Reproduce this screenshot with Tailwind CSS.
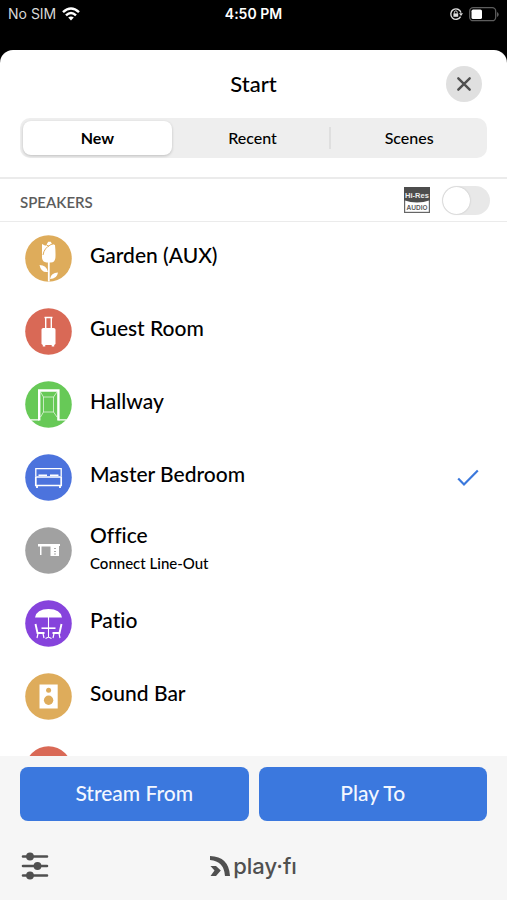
<!DOCTYPE html>
<html lang="en">
<head>
<meta charset="utf-8">
<meta name="viewport" content="width=device-width, initial-scale=1">
<title>Start</title>
<script src="https://cdn.jsdelivr.net/npm/@tailwindcss/browser@4"></script>
</head>
<body class="flex h-dvh flex-col overflow-hidden bg-black font-['Lato','Liberation_Sans',sans-serif] text-black [font-variant-ligatures:none]">

<div class="grid h-[50px] shrink-0 grid-cols-3 items-start px-2 pt-1 font-['Inter','Liberation_Sans',sans-serif] text-sm leading-5 text-white">
  <div class="flex items-center gap-1.5">
    <span class="text-[#d8d8d8]">No SIM</span>
    <svg class="h-[14px] w-[18px]" viewBox="0 0 18 14" fill="none" stroke="#fff" stroke-width="2.5" aria-hidden="true">
      <path d="M1 5.2Q9-2.2 17 5.2"/><path d="M4 8.3Q9 3.6 14 8.3"/><path d="M9 13.5L6.2 10.6Q9 8.4 11.8 10.6Z" fill="#fff" stroke="none"/>
    </svg>
  </div>
  <span class="text-center font-semibold">4:50 PM</span>
  <div class="flex h-5 items-center justify-end gap-1.5">
    <svg class="size-[14px]" viewBox="0 0 14 14" fill="none" stroke="#ddd" stroke-width="1.4" aria-hidden="true">
      <path d="M11.6 9.6A5.2 5.2 0 1 1 12 5.6"/><path d="M10 6.2h4L12 9z" fill="#ddd" stroke="none"/><path d="M4.4 6.4h4.8v3.4H4.4z" fill="#ddd" stroke="none"/><path d="M5.4 6.6V5.3a1.4 1.4 0 0 1 2.8 0v1.3" stroke-width="1"/>
    </svg>
    <svg class="h-[15px] w-[30px]" viewBox="0 0 30 15" aria-hidden="true">
      <rect x=".7" y=".7" width="26" height="13" rx="3.5" fill="none" stroke="#5d5d5d" stroke-width="1.3"/>
      <rect x="2.5" y="2.6" width="10.5" height="9.4" rx="1.6" fill="#fff"/><path d="M28 5v5q1.7-.8 1.7-2.500T28 5z" fill="#5d5d5d"/>
    </svg>
  </div>
</div>

<main class="flex min-h-0 flex-1 flex-col overflow-hidden rounded-t-[13px] bg-white">
  <header class="grid h-[68px] shrink-0 grid-cols-[36px_1fr_36px] items-center px-[25px]">
    <h1 class="col-start-2 text-center text-[22px] leading-7 font-medium">Start</h1>
    <button type="button" aria-label="Close" class="grid size-9 place-items-center rounded-full bg-[#e0e0e0]">
      <svg class="size-4" viewBox="0 0 16 16" fill="none" stroke="#505050" stroke-width="2.400" stroke-linecap="round" aria-hidden="true"><path d="M2.300 2.300l11.400 11.400M13.700 2.300L2.300 13.700"/></svg>
    </button>
  </header>

  <div role="tablist" class="mx-5 grid h-10 shrink-0 grid-cols-3 items-center rounded-[10px] bg-[#eee] text-base">
    <button type="button" role="tab" aria-selected="true" class="mr-1 ml-[3px] h-[34px] rounded-lg bg-white font-bold shadow-[0_1px_3px_rgba(0,0,0,0.2)]">New</button>
    <button type="button" role="tab" aria-selected="false" class="h-[22px] border-r-2 border-[#dfdfdf] leading-5 font-medium">Recent</button>
    <button type="button" role="tab" aria-selected="false" class="h-[22px] leading-5 font-medium">Scenes</button>
  </div>

  <div class="mt-[19px] flex h-[45px] shrink-0 items-center border-t-2 border-b border-[#ebebeb] pr-[17px] pl-5">
    <h2 class="flex-1 pt-1 text-[15px] leading-5 font-semibold text-[#5c5c5c]">SPEAKERS</h2>
    <svg class="mr-3 size-[26px]" viewBox="0 0 26 26" role="img" aria-label="Hi-Res Audio">
      <rect x=".6" y=".6" width="24.800" height="24.800" fill="#fff" stroke="#666" stroke-width="1.2"/>
      <path d="M0 0h26v13.200Q13 18 0 13.200z" fill="#4d4d4d"/>
      <text x="13" y="11" text-anchor="middle" font-family="Liberation Sans, sans-serif" font-size="7.500" font-weight="700" fill="#eee">Hi-Res</text>
      <text x="13" y="23" text-anchor="middle" font-family="Inter, sans-serif" font-size="6.500" font-weight="600" fill="#555">AUDIO</text>
    </svg>
    <input type="checkbox" role="switch" aria-label="Hi-Res Audio" class="h-[29px] w-12 appearance-none rounded-full bg-[#e8e8e8] p-px before:block before:size-[27px] before:rounded-full before:bg-white before:shadow-[0_0_2px_rgba(0,0,0,0.2)]">
  </div>

  <ul class="min-h-0 flex-1 overflow-hidden text-[21px] leading-7 font-medium">
    <li><button type="button" class="flex h-[73px] w-full items-center gap-[18px] pr-7 pl-[25px] text-left">
      <svg class="size-[47px] shrink-0" viewBox="0 0 47 47" aria-hidden="true">
        <circle cx="23.500" cy="23.500" r="23.300" fill="#deac5b"/>
        <path d="M17 9l3.500 1.800 1.500-2 1.200-2h2.600l1 2L30 10q.8 8 .4 13-.8 4.500-4.400 4.500h-4.500q-4-.5-4.500-4.500z" fill="#fff"/>
        <path d="M18 20q1-7 8-10.500l2-.5M21 9.500l3 2" fill="none" stroke="#deac5b" stroke-width="1"/>
        <path d="M23.800 27v19.500" stroke="#fff" stroke-width="1.800"/>
        <path d="M14.500 30q7 0 8.500 7-7 1-8.500-7zM33 37.500q-7 0-8 6.500 7 0 8-6.500z" fill="#fff"/>
      </svg><span class="pb-2">Garden (AUX)</span></button></li>
    <li><button type="button" class="flex h-[73px] w-full items-center gap-[18px] pr-7 pl-[25px] text-left">
      <svg class="size-[47px] shrink-0" viewBox="0 0 47 47" aria-hidden="true">
        <circle cx="23.500" cy="23.500" r="23.300" fill="#d96956"/>
        <path d="M19.500 9.500h8M20.700 10v11M26.300 10v11" stroke="#fff" stroke-width="1.400" fill="none"/>
        <rect x="16.500" y="20" width="14" height="17" rx="1.800" fill="#fff"/><path d="M17.800 36h2.500v2.500h-2.500zM26.700 36h2.500v2.500h-2.500z" fill="#fff"/>
      </svg><span class="pb-2">Guest Room</span></button></li>
    <li><button type="button" class="flex h-[73px] w-full items-center gap-[18px] pr-7 pl-[25px] text-left">
      <svg class="size-[47px] shrink-0" viewBox="0 0 47 47" fill="none" stroke="#fff" aria-hidden="true">
        <circle cx="23.500" cy="23.500" r="23.300" fill="#67c957" stroke="none"/>
        <path d="M5.500 38.800h8.500M33.500 38.800h8" stroke-width="1.300"/><path d="M14.200 39.400V9.500h19.200v29.900" stroke-width="2.400"/>
        <path d="M18.500 16h10v15h-10zM15.500 11l3 5M32 11l-3.500 5M18.500 31l-3 5M28.500 31l3.500 5" stroke-width=".8" stroke-opacity=".8"/>
      </svg><span class="pb-2">Hallway</span></button></li>
    <li><button type="button" aria-pressed="true" class="flex h-[73px] w-full items-center gap-[18px] pr-7 pl-[25px] text-left">
      <svg class="size-[47px] shrink-0" viewBox="0 0 47 47" fill="none" stroke="#fff" aria-hidden="true">
        <circle cx="23.500" cy="23.500" r="23.300" fill="#4c73dd" stroke="none"/>
        <path d="M10.800 22V14.700h25.400V22" stroke-width="1.300"/><path d="M10.800 23h25.400v8.500H10.800z" stroke-width="1.700"/>
        <path d="M13.500 21.200h8.500M25 21.200h8.500" stroke-width="1.600"/><path d="M12 31.500v2.500M35 31.500v2.500" stroke-width="1.800"/>
      </svg><span class="flex-1 pb-2">Master Bedroom</span>
      <svg class="h-[18px] w-[22px]" viewBox="0 0 22 18" fill="none" stroke="#3b78dc" stroke-width="2.200" aria-hidden="true"><path d="M1.200 9.500l5.800 6L20.800 1.500"/></svg></button></li>
    <li><button type="button" class="flex h-[73px] w-full items-center gap-[18px] pr-7 pl-[25px] text-left">
      <svg class="size-[47px] shrink-0" viewBox="0 0 47 47" aria-hidden="true">
        <circle cx="23.500" cy="23.500" r="23.300" fill="#a1a1a1"/>
        <path d="M13 17h22v2h-1v10h-8.500V19.500h-9V28H15v-8.500h-2z" fill="#fff"/><path d="M29 21.500h2M29 24.500h2M29 27h2" stroke="#a1a1a1" stroke-width=".9"/>
      </svg><span class="flex flex-col pb-1"><span>Office</span><span class="text-[15px] leading-7">Connect Line-Out</span></span></button></li>
    <li><button type="button" class="flex h-[73px] w-full items-center gap-[18px] pr-7 pl-[25px] text-left">
      <svg class="size-[47px] shrink-0" viewBox="0 0 47 47" fill="none" stroke="#fff" aria-hidden="true">
        <circle cx="23.500" cy="23.500" r="23.300" fill="#8643dc" stroke="none"/>
        <path d="M10 17.500Q11.500 9 23.500 9T37 17.500z" fill="#fff" stroke="none"/>
        <path d="M23.500 17v20.500M20.500 38.500l3-1.500 3 1.500" stroke-width="1.100"/><path d="M16.500 28.200h14" stroke-width="1.600"/>
        <path d="M10.500 24l2 9h7M36.500 24l-2 9h-7" stroke-width="1.900"/><path d="M13 33.500l-1 4.500M18 33.500l1 4.500M34 33.500l1 4.500M29 33.500l-1 4.500" stroke-width="1.200"/>
      </svg><span class="pb-2">Patio</span></button></li>
    <li><button type="button" class="flex h-[73px] w-full items-center gap-[18px] pr-7 pl-[25px] text-left">
      <svg class="size-[47px] shrink-0" viewBox="0 0 47 47" aria-hidden="true">
        <circle cx="23.500" cy="23.500" r="23.300" fill="#deac5b"/>
        <path d="M14.500 11.500h18.200v24H14.500z" fill="#fff"/><circle cx="23.600" cy="17.300" r="2.500" fill="#deac5b"/><circle cx="23.600" cy="27.200" r="4.700" fill="#deac5b"/>
      </svg><span class="pb-2">Sound Bar</span></button></li>
    <li class="flex h-[73px] items-center pl-[25px]"><svg class="size-[47px]" viewBox="0 0 47 47" aria-hidden="true"><circle cx="23.500" cy="23.500" r="23.300" fill="#d96956"/></svg></li>
  </ul>

  <footer class="shrink-0 bg-[#f6f6f6] pt-[11px] pb-[14px]">
    <div class="grid grid-cols-2 gap-2.5 px-5 text-[21px] leading-7 font-medium text-[#f3f7ff]">
      <button type="button" class="h-[54px] rounded-lg bg-[#3b78de] pb-0.5">Stream From</button>
      <button type="button" class="h-[54px] rounded-lg bg-[#3b78de] pb-0.5">Play To</button>
    </div>
    <div class="mt-[25px] grid h-10 grid-cols-[28px_1fr_28px] items-center px-[21px]">
      <button type="button" aria-label="Settings">
        <svg class="size-7" viewBox="0 0 28 28" fill="#505050" stroke="#505050" stroke-width="2.600" stroke-linecap="round" aria-hidden="true"><path d="M2 4.500h24M2 14h24M2 23.500h24"/><g stroke="none"><circle cx="9" cy="4.500" r="3.900"/><circle cx="16.500" cy="14" r="3.900"/><circle cx="9" cy="23.500" r="3.900"/></g></svg>
      </button>
      <div class="flex items-center justify-center gap-[3px] text-[#505050]">
        <svg class="h-5 w-5" viewBox="0 0 20 20" aria-hidden="true"><path d="M0 0Q19 .5 20 20h-5Q14 5 0 4z" fill="currentColor"/><path d="M.5 10h5.500l4.800 4.600L6 20H.5l4-5.400z" fill="currentColor"/></svg>
        <span class="font-['Inter','Liberation_Sans',sans-serif] text-[22px] leading-7 font-medium">play·fı</span>
      </div>
    </div>
  </footer>
</main>
</body>
</html>
